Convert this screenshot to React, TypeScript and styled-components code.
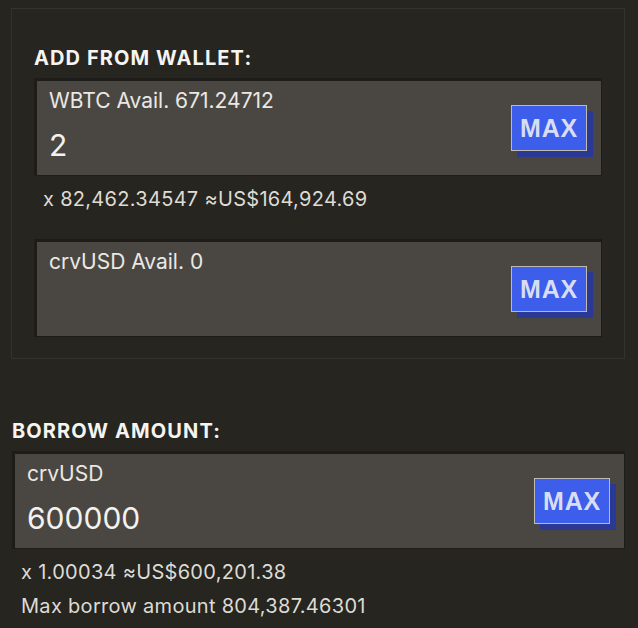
import React from "react";
import styled, { createGlobalStyle } from "styled-components";

const Global = createGlobalStyle`
  html, body {
    margin: 0;
    padding: 0;
    background: #262520;
  }
  body {
    font-family: Inter, "Liberation Sans", sans-serif;
    color: #ece9e4;
  }
  * { box-sizing: border-box; }
`;

const Page = styled.div`
  width: 638px;
  min-height: 628px;
  background: #262520;
  padding: 8px 13px 0 11px;
`;

const Panel = styled.section`
  border: 1px solid #33322d;
  padding: 37px 22px 21px;
`;

const BorrowSection = styled.section`
  padding: 60px 0 0 1px;
`;

const Title = styled.h2`
  margin: 0 0 8px;
  font-family: Inter, "Liberation Sans", sans-serif;
  font-weight: 700;
  font-size: 20px;
  line-height: 24px;
  letter-spacing: 1.1px;
  color: #f6f4f0;
`;

const InputBox = styled.div`
  height: 98px;
  background: #4a4743;
  border-style: solid;
  border-color: #1d1c19;
  border-width: 3px 1px 1px 3px;
  display: flex;
  align-items: center;
  justify-content: space-between;
  padding: 0 14px 0 12px;
`;

const Fields = styled.div`
  align-self: stretch;
  display: flex;
  flex-direction: column;
  padding-top: 7px;
`;

const Label = styled.div`
  font-size: 21px;
  line-height: 26px;
  color: #ebe8e3;
`;

const Value = styled.div`
  margin-top: 12px;
  font-size: 30px;
  line-height: 38px;
  color: #f4f2ee;
`;

const MaxButton = styled.button`
  width: 76px;
  height: 46px;
  padding: 0;
  background: #3c5eea;
  border: 1px solid #bfbbb2;
  box-shadow: 6px 6px 0 #2a3995;
  color: #d8ddf4;
  font-family: "Liberation Sans", Arial, sans-serif;
  font-weight: 700;
  font-size: 25px;
  letter-spacing: 0.8px;
  cursor: pointer;
`;

const Notes = styled.div<{ $indent: number; $gapBelow?: number }>`
  display: flex;
  flex-direction: column;
  gap: 10px;
  padding: 11px 0 0 ${(p) => p.$indent}px;
  margin-bottom: ${(p) => p.$gapBelow ?? 0}px;
`;

const Note = styled.div`
  font-size: 20px;
  line-height: 24px;
  letter-spacing: 0.3px;
  color: #dedbd5;
`;

function AmountInput({ label, value }: { label: string; value?: string }) {
  return (
    <InputBox>
      <Fields>
        <Label>{label}</Label>
        {value !== undefined && <Value>{value}</Value>}
      </Fields>
      <MaxButton>MAX</MaxButton>
    </InputBox>
  );
}

export default function App() {
  return (
    <>
      <Global />
      <Page>
        <Panel>
          <Title>ADD FROM WALLET:</Title>
          <AmountInput label="WBTC Avail. 671.24712" value="2" />
          <Notes $indent={9} $gapBelow={28}>
            <Note>x 82,462.34547 ≈US$164,924.69</Note>
          </Notes>
          <AmountInput label="crvUSD Avail. 0" />
        </Panel>
        <BorrowSection>
          <Title>BORROW AMOUNT:</Title>
          <AmountInput label="crvUSD" value="600000" />
          <Notes $indent={9}>
            <Note>x 1.00034 ≈US$600,201.38</Note>
            <Note>Max borrow amount 804,387.46301</Note>
          </Notes>
        </BorrowSection>
      </Page>
    </>
  );
}
